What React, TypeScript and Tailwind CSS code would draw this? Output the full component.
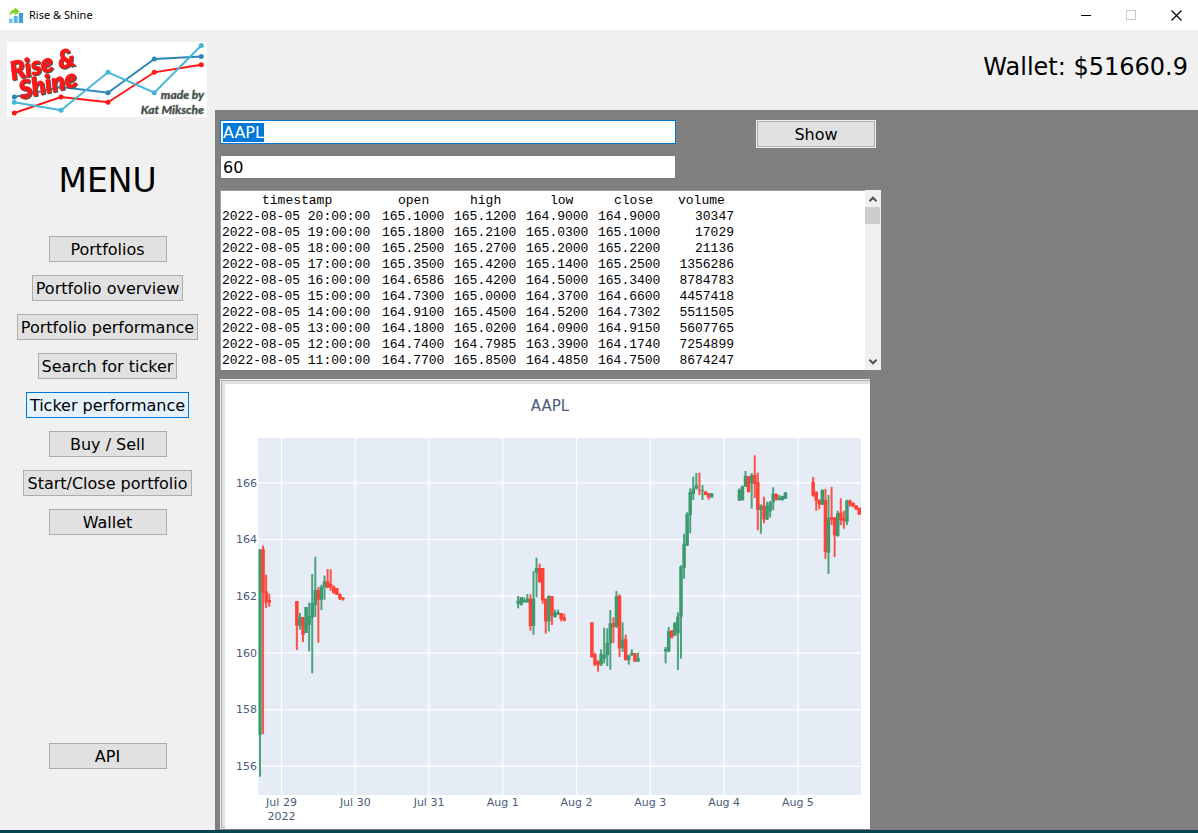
import React, { useEffect, useRef } from "react";

type Candle = [
  color: "g" | "r",
  high: number,
  low: number,
  bodyTop: number,
  bodyBottom: number,
];

interface Session {
  hour: number;
  top: number;
  candles: Candle[];
}

const HOUR = 3.073;
const X0 = 281.5;

// Candle values are thirds of a chart unit below the session's top line.
const sessions: Session[] = [
  {
    hour: -7,
    top: 370,
    candles: [
      ["g", 538, 1220, 538, 1095],
      ["r", 527, 1092, 538, 668],
      ["r", 614, 714, 664, 697],
      ["r", 671, 710, 690, 698],
    ],
  },
  {
    hour: 5,
    top: 370,
    candles: [
      ["r", 693, 840, 693, 767],
      ["g", 729, 779, 741, 767],
      ["r", 741, 816, 741, 795],
      ["g", 711, 789, 711, 789],
      ["g", 698, 844, 738, 765],
      ["g", 612, 910, 699, 743],
      ["g", 560, 741, 660, 705],
      ["r", 651, 818, 660, 689],
      ["g", 644, 720, 650, 689],
      ["g", 617, 689, 634, 652],
      ["r", 597, 655, 634, 652],
      ["r", 598, 663, 641, 652],
      ["r", 646, 672, 650, 668],
      ["r", 654, 675, 654, 675],
      ["r", 670, 690, 672, 687],
      ["r", 682, 692, 682, 688],
    ],
  },
  {
    hour: 77,
    top: 540,
    candles: [
      ["g", 168, 205, 182, 191],
      ["g", 171, 197, 171, 194],
      ["g", 172, 187, 180, 187],
      ["g", 162, 188, 176, 187],
      ["r", 163, 272, 176, 258],
      ["g", 93, 284, 176, 258],
      ["g", 53, 172, 84, 98],
      ["r", 71, 128, 84, 126],
      ["r", 84, 191, 84, 181],
      ["r", 176, 281, 176, 244],
      ["g", 166, 274, 168, 244],
      ["r", 168, 255, 168, 226],
      ["g", 209, 233, 217, 231],
      ["g", 209, 225, 217, 223],
      ["r", 219, 244, 219, 237],
      ["r", 221, 244, 232, 241],
    ],
  },
  {
    hour: 101,
    top: 540,
    candles: [
      ["r", 247, 353, 247, 351],
      ["r", 338, 378, 343, 374],
      ["r", 362, 395, 362, 376],
      ["g", 328, 378, 342, 374],
      ["g", 263, 370, 345, 356],
      ["g", 265, 378, 309, 346],
      ["g", 210, 389, 250, 310],
      ["r", 232, 309, 249, 260],
      ["g", 153, 264, 168, 260],
      ["r", 163, 351, 168, 325],
      ["g", 247, 336, 299, 325],
      ["r", 284, 362, 298, 360],
      ["g", 344, 374, 346, 360],
      ["g", 328, 348, 338, 344],
      ["r", 339, 365, 339, 365],
      ["g", 338, 365, 354, 365],
    ],
  },
  {
    hour: 125,
    top: 440,
    candles: [
      ["g", 621, 670, 627, 634],
      ["g", 561, 637, 574, 635],
      ["r", 571, 595, 571, 593],
      ["g", 546, 588, 549, 586],
      ["g", 517, 690, 530, 580],
      ["g", 376, 656, 380, 530],
      ["g", 281, 416, 312, 384],
      ["g", 217, 318, 222, 317],
      ["g", 145, 280, 156, 225],
      ["g", 110, 180, 146, 162],
      ["g", 99, 148, 136, 146],
      ["r", 98, 165, 150, 152],
      ["g", 135, 180, 150, 152],
      ["r", 153, 165, 155, 165],
      ["r", 159, 179, 161, 172],
      ["g", 159, 173, 160, 172],
    ],
  },
  {
    hour: 149,
    top: 440,
    candles: [
      ["g", 145, 182, 150, 182],
      ["g", 137, 182, 139, 180],
      ["g", 93, 140, 107, 140],
      ["r", 108, 158, 109, 156],
      ["g", 99, 206, 105, 130],
      ["r", 46, 174, 105, 132],
      ["r", 98, 271, 126, 210],
      ["g", 193, 281, 197, 210],
      ["r", 170, 250, 197, 238],
      ["g", 185, 240, 198, 238],
      ["g", 183, 232, 187, 214],
      ["g", 142, 210, 161, 187],
      ["r", 160, 182, 162, 178],
      ["g", 165, 181, 172, 180],
      ["g", 167, 182, 168, 180],
      ["g", 156, 177, 158, 176],
    ],
  },
  {
    hour: 173,
    top: 440,
    candles: [
      ["r", 111, 170, 126, 167],
      ["r", 154, 212, 156, 182],
      ["r", 178, 208, 180, 193],
      ["g", 148, 195, 150, 194],
      ["r", 147, 357, 180, 336],
      ["g", 165, 402, 233, 338],
      ["r", 141, 255, 232, 238],
      ["r", 232, 351, 232, 286],
      ["g", 212, 290, 220, 288],
      ["r", 175, 255, 218, 240],
      ["r", 212, 266, 235, 243],
      ["g", 179, 255, 182, 245],
      ["r", 179, 200, 182, 193],
      ["r", 188, 202, 188, 200],
      ["r", 196, 210, 196, 208],
      ["r", 203, 224, 203, 224],
    ],
  },
];

const days = ["Jul 29", "Jul 30", "Jul 31", "Aug 1", "Aug 2", "Aug 3", "Aug 4", "Aug 5"];
const prices = [166, 164, 162, 160, 158, 156];

const rows: string[][] = [
  ["2022-08-05 20:00:00", "165.1000", "165.1200", "164.9000", "164.9000", "30347"],
  ["2022-08-05 19:00:00", "165.1800", "165.2100", "165.0300", "165.1000", "17029"],
  ["2022-08-05 18:00:00", "165.2500", "165.2700", "165.2000", "165.2200", "21136"],
  ["2022-08-05 17:00:00", "165.3500", "165.4200", "165.1400", "165.2500", "1356286"],
  ["2022-08-05 16:00:00", "164.6586", "165.4200", "164.5000", "165.3400", "8784783"],
  ["2022-08-05 15:00:00", "164.7300", "165.0000", "164.3700", "164.6600", "4457418"],
  ["2022-08-05 14:00:00", "164.9100", "165.4500", "164.5200", "164.7302", "5511505"],
  ["2022-08-05 13:00:00", "164.1800", "165.0200", "164.0900", "164.9150", "5607765"],
  ["2022-08-05 12:00:00", "164.7400", "164.7985", "163.3900", "164.1740", "7254899"],
  ["2022-08-05 11:00:00", "164.7700", "165.8500", "164.4850", "164.7500", "8674247"],
];

const menu = [
  "Portfolios",
  "Portfolio overview",
  "Portfolio performance",
  "Search for ticker",
  "Ticker performance",
  "Buy / Sell",
  "Start/Close portfolio",
  "Wallet",
];

function AppIcon() {
  return (
    <svg viewBox="0 0 16 17" className="h-[17px] w-4" aria-hidden="true">
      <rect x="1" y="11.5" width="3.6" height="4.5" fill="#6cc4f2" />
      <rect x="5.8" y="9" width="3.8" height="7" fill="#4fb2e8" />
      <rect x="10.8" y="6" width="4.2" height="10" fill="#3a9fdb" />
      <path d="M1 9C1.6 5 4 2.8 6.6 2.6V.2l5 4.2L6.8 8.4V6C4.4 6 2.4 7 1 9Z" fill="#86cf1f" />
    </svg>
  );
}

function Line({ color, points }: { color: string; points: [number, number][] }) {
  return (
    <g fill={color}>
      <polyline points={points.map((p) => p.join(",")).join(" ")} fill="none" stroke={color} strokeWidth="1.9" />
      {points.map(([x, y]) => (
        <circle key={x} cx={x} cy={y} r="2.5" />
      ))}
    </g>
  );
}

function Logo() {
  return (
    <svg viewBox="0 0 200 75" className="h-[75px] w-[200px] bg-white" role="img" aria-label="Rise & Shine logo">
      <Line color="#2b87b8" points={[[7.3, 55], [54, 45], [101, 50.7], [147.3, 17], [194.3, 14.5]]} />
      <Line color="#ff1616" points={[[7.3, 71], [54, 55], [101, 60.3], [147.3, 30.3], [194.3, 22.7]]} />
      <Line color="#41b6d6" points={[[7.3, 60.3], [54, 68.3], [101, 30.3], [147.3, 50.7], [194.3, 3.5]]} />
      <g
        className="drop-shadow-[1px_1px_0_#3f5a52]"
        fontFamily="Lato, sans-serif"
        fontWeight="900"
        fontStyle="italic"
        fontSize="25"
        fill="#ff1616"
        stroke="#ff1616"
        strokeWidth="0.9"
      >
        <text transform="translate(5 38) rotate(-13)">Rise &amp;</text>
        <text transform="translate(14 57) rotate(-13)">Shine</text>
      </g>
      <g
        fontFamily="Lato, sans-serif"
        fontWeight="900"
        fontStyle="italic"
        fontSize="12"
        fill="#46524e"
        stroke="#46524e"
        strokeWidth="0.3"
        textAnchor="end"
      >
        <text x="197" y="57">made by</text>
        <text x="197" y="72">Kat Miksche</text>
      </g>
    </svg>
  );
}

function Chart() {
  return (
    <svg viewBox="225 384 645 445" className="block w-full bg-white" role="img" aria-label="AAPL candlestick chart">
      <defs>
        <clipPath id="plot">
          <rect x="258.3" y="438" width="602.7" height="357" />
        </clipPath>
      </defs>
      <rect x="258.3" y="438" width="602.7" height="357" fill="#e5ecf6" />
      <g stroke="#ffffff" strokeWidth="1.2">
        {days.map((d, i) => (
          <line key={d} x1={X0 + i * 73.77} x2={X0 + i * 73.77} y1="438" y2="795" />
        ))}
        {prices.map((p, i) => (
          <line key={p} x1="258.3" x2="861" y1={482.8 + i * 56.7} y2={482.8 + i * 56.7} />
        ))}
      </g>
      <g clipPath="url(#plot)">
        {sessions.map((s) =>
          s.candles.map(([c, high, low, bodyTop, bodyBottom], i) => {
            const x = X0 + (s.hour + i) * HOUR;
            const color = c === "g" ? "#3d9970" : "#ff4136";
            return (
              <g key={s.hour + i} fill={color}>
                <rect x={x - 1} y={s.top + high / 3} width="2" height={(low - high) / 3} opacity="0.9" />
                <rect x={x - 1.75} y={s.top + bodyTop / 3} width="3.5" height={(bodyBottom - bodyTop) / 3} />
              </g>
            );
          }),
        )}
      </g>
      <g fontFamily="'DejaVu Sans', Verdana, sans-serif" fontSize="11" fill="#4a5b7c">
        <text x="550" y="411" textAnchor="middle" fontSize="15">
          AAPL
        </text>
        {prices.map((p, i) => (
          <text key={p} x="257" y={486.5 + i * 56.7} textAnchor="end">
            {p}
          </text>
        ))}
        {days.map((d, i) => (
          <text key={d} x={X0 + i * 73.77} y="806" textAnchor="middle">
            {d}
          </text>
        ))}
        <text x={X0} y="820" textAnchor="middle">
          2022
        </text>
      </g>
    </svg>
  );
}

function MenuButton({ label, active = false }: { label: string; active?: boolean }) {
  const tone = active ? "border-[#0078d7] bg-[#e5f1fb]" : "border-[#adadad] bg-[#e1e1e1]";
  return (
    <button
      type="button"
      className={`h-[26px] min-w-[118px] border px-[3px] pt-[2px] text-base leading-[22px] whitespace-nowrap ${tone}`}
    >
      {label}
    </button>
  );
}

function TitleBar() {
  return (
    <div className="flex h-[30px] items-center bg-white pl-2">
      <AppIcon />
      <span className="ml-[5px] font-['Noto_Sans',sans-serif] text-[11px]">Rise &amp; Shine</span>
      <div className="ml-auto flex h-full">
        <button type="button" aria-label="Minimize" className="flex w-[43px] items-center justify-center">
          <svg viewBox="0 0 11 11" className="size-[11px]" shapeRendering="crispEdges">
            <path d="M0 5h10v1H0Z" fill="#000" />
          </svg>
        </button>
        <button type="button" aria-label="Maximize" className="flex w-[47px] items-center justify-center">
          <svg viewBox="0 0 11 11" className="size-[11px]" shapeRendering="crispEdges">
            <path d="M.5.5h9v9h-9Z" fill="none" stroke="#c8c8c8" />
          </svg>
        </button>
        <button type="button" aria-label="Close" className="flex w-[43px] items-center justify-center">
          <svg viewBox="0 0 11 11" className="size-[11px]">
            <path d="M.5.5l10 10M10.5.5l-10 10" fill="none" stroke="#000" strokeWidth="1.2" />
          </svg>
        </button>
      </div>
    </div>
  );
}

function ScrollArrow({ up = false }: { up?: boolean }) {
  return (
    <button
      type="button"
      aria-label={up ? "Scroll up" : "Scroll down"}
      className="flex h-[17px] w-full items-center justify-center"
    >
      <svg viewBox="0 0 8 6" className="h-[6px] w-2">
        <path d={up ? "M.5 5.2 4 1.7 7.5 5.2" : "M.5.8 4 4.3 7.5.8"} fill="none" stroke="#505050" strokeWidth="2" />
      </svg>
    </button>
  );
}

function PriceTable() {
  return (
    <div className="flex h-[180px] w-[661px] bg-white">
      <div className="flex-1 border-t border-l border-[#a0a0a0] pt-[2px] pl-px">
        <table className="table-fixed border-collapse font-['Liberation_Mono','Courier_New',monospace] text-[13px] leading-4 whitespace-pre">
          <colgroup>
            <col className="w-[160px]" />
            <col className="w-[72px]" />
            <col className="w-[72px]" />
            <col className="w-[72px]" />
            <col className="w-[72px]" />
            <col className="w-16" />
          </colgroup>
          <thead>
            <tr className="text-left">
              <th className="p-0 pl-10 font-normal">timestamp</th>
              <th className="p-0 pl-4 font-normal">open</th>
              <th className="p-0 pl-4 font-normal">high</th>
              <th className="p-0 pl-6 font-normal">low</th>
              <th className="p-0 pl-4 font-normal">close</th>
              <th className="p-0 pl-2 font-normal">volume</th>
            </tr>
          </thead>
          <tbody>
            {rows.map((row) => (
              <tr key={row[0]}>
                {row.map((cell, i) => (
                  <td key={i} className={i === 5 ? "p-0 text-right" : "p-0"}>
                    {cell}
                  </td>
                ))}
              </tr>
            ))}
          </tbody>
        </table>
      </div>
      <div className="flex w-4 flex-col bg-[#f0f0f0]">
        <ScrollArrow up />
        <div className="h-[17px] w-[15px] bg-[#cdcdcd]" />
        <div className="mt-auto">
          <ScrollArrow />
        </div>
      </div>
    </div>
  );
}

export default function App() {
  const ticker = useRef<HTMLInputElement>(null);

  useEffect(() => {
    ticker.current?.focus();
    ticker.current?.select();
  }, []);

  return (
    <div className="flex min-h-screen flex-col border-b-[3px] border-[#04454f] bg-[#f0f0f0] font-['DejaVu_Sans',Verdana,sans-serif] text-black">
      <TitleBar />
      <div className="flex flex-1">
        <aside className="flex w-[215px] shrink-0 flex-col items-center pt-3 pb-[61px]">
          <div className="w-full pl-[7px]">
            <Logo />
          </div>
          <h1 className="mt-[43px] text-[33px] leading-[42px]">MENU</h1>
          <nav className="mt-[34px] flex flex-col items-center gap-[13px]">
            {menu.map((label) => (
              <MenuButton key={label} label={label} active={label === "Ticker performance"} />
            ))}
          </nav>
          <div className="mt-auto">
            <MenuButton label="API" />
          </div>
        </aside>
        <div className="flex min-w-0 flex-1 flex-col">
          <header className="flex h-20 items-start justify-end pt-[22px] pr-[10px] text-2xl leading-[30px]">
            Wallet: $51660.9
          </header>
          <main className="flex-1 bg-[#808080] pt-[10px] pb-px pl-[5px]">
            <form className="flex items-start gap-20" onSubmit={(e) => e.preventDefault()}>
              <div className="flex w-[456px] flex-col gap-[11px]">
                <input
                  ref={ticker}
                  aria-label="Ticker"
                  defaultValue="AAPL"
                  className="h-6 border border-[#0078d7] bg-white px-[2px] pt-px text-base leading-[19px] outline-none selection:bg-[#0078d7] selection:text-white"
                />
                <input
                  aria-label="Interval in minutes"
                  defaultValue="60"
                  className="h-6 border border-[#7a7a7a] bg-white px-[2px] pt-px text-base leading-[19px] outline-none"
                />
              </div>
              <div className="border border-[#f0f0f0]">
                <button
                  type="submit"
                  className="h-[26px] w-[118px] border border-[#adadad] bg-[#e1e1e1] pt-[2px] text-base leading-[22px]"
                >
                  Show
                </button>
              </div>
            </form>
            <div className="mt-[11px]">
              <PriceTable />
            </div>
            <div className="mt-[9px] w-[650px] border-t border-l border-[#f0f0f0]">
              <div className="flex bg-[#f0f0f0]">
                <div className="mb-px w-1 border-t border-b border-l border-[#adadad] bg-[#e1e1e1]" />
                <div className="flex-1 border-t border-[#adadad] bg-[#e1e1e1] pt-[3px]">
                  <Chart />
                </div>
              </div>
            </div>
          </main>
        </div>
      </div>
    </div>
  );
}
